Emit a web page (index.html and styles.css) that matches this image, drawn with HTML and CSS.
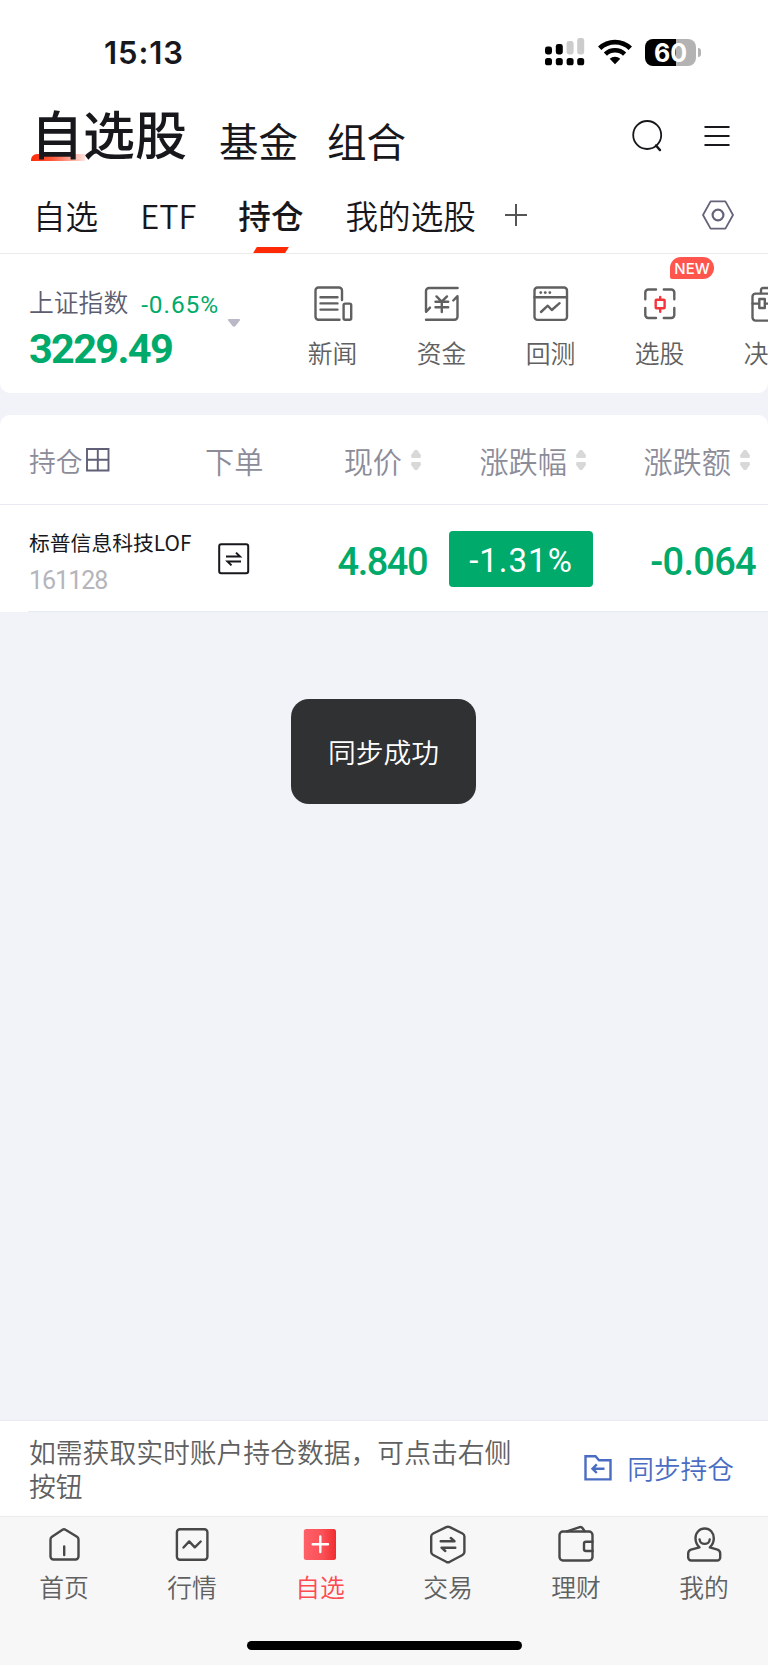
FILE: index.html
```
<!DOCTYPE html>
<html lang="zh-CN">
<head>
    <meta charset="UTF-8">
    <meta name="viewport" content="width=device-width, initial-scale=1.0">
    <title>自选股</title>
    <link rel="stylesheet" href="styles.css">
</head>
<body>
    <div class="page">
        <div class="status-bar">
            <span class="time">15:13</span>
            <svg class="signal" width="40" height="28" viewBox="0 0 40 28">
                <rect x="0" y="8.5" width="7" height="8" rx="2.4"/>
                <rect x="10.8" y="6" width="7" height="10.5" rx="2.4"/>
                <rect x="21.6" y="3" width="7" height="13.5" rx="2.4" fill="#ccc"/>
                <rect x="32.2" y="0" width="7" height="16.5" rx="2.4" fill="#ccc"/>
                <rect x="0" y="20" width="7" height="7.3" rx="2.6"/>
                <rect x="10.8" y="20" width="7" height="7.3" rx="2.6"/>
                <rect x="21.6" y="20" width="7" height="7.3" rx="2.6"/>
                <rect x="32.2" y="20" width="7" height="7.3" rx="2.6"/>
            </svg>
            <svg class="wifi" width="34" height="26" viewBox="0 0 34 26">
                <path d="M1.7 9.3a22 22 0 0 1 30.6 0" fill="none" stroke="#000" stroke-width="4.8"/>
                <path d="M7.4 15.1a14 14 0 0 1 19.2 0" fill="none" stroke="#000" stroke-width="4.6"/>
                <path d="M17 25.2l-5.3-5.4a7.6 7.6 0 0 1 10.6 0z"/>
            </svg>
            <div class="battery"><span>60</span></div>
            <i class="battery-tip"></i>
        </div>

        <header class="header">
            <h1 class="title"><span>自选股</span></h1>
            <a class="title-link">基金</a>
            <a class="title-link">组合</a>
            <svg class="search" width="32" height="34" viewBox="0 0 32 34" fill="none" stroke="#17171c" stroke-width="1.8">
                <circle cx="15.2" cy="16" r="14"/>
                <path d="M24 26.5l4 4.6" stroke-width="2.4" stroke-linecap="round"/>
            </svg>
            <svg class="menu" width="26" height="24" viewBox="0 0 26 24" stroke="#17171c" stroke-width="2">
                <path d="M.5 3h25M.5 12h25M.5 21h25"/>
            </svg>
        </header>

        <nav class="tabs">
            <a class="tab">自选</a>
            <a class="tab">ETF</a>
            <a class="tab active">持仓</a>
            <a class="tab">我的选股</a>
            <svg class="add" width="22" height="22" viewBox="0 0 22 22" stroke="#555" stroke-width="2">
                <path d="M0 11h22M11 0v22"/>
            </svg>
            <svg class="setting" width="32" height="30" viewBox="0 0 32 30" fill="none" stroke="#63637a" stroke-width="1.8" stroke-linejoin="round">
                <path d="M8.6 1.4h14.8L31 15l-7.6 13.6H8.6L1 15z"/>
                <circle cx="16" cy="15" r="5.4" stroke-width="2.2"/>
            </svg>
        </nav>

        <section class="index-panel">
            <div class="index">
                <div class="index-top">
                    <span class="index-name">上证指数</span>
                    <span class="index-rate">-0.65%</span>
                </div>
                <div class="index-value">3229.49</div>
            </div>
            <svg class="caret" width="14" height="10" viewBox="0 0 14 10">
                <path d="M2 1h10q2 0 .8 1.5L8.5 8Q7 9.4 5.5 8L1.2 2.5Q0 1 2 1z" fill="#b9b8c6"/>
            </svg>
            <div class="tools">
                <a class="tool">
                    <svg width="40" height="40" viewBox="0 0 40 40">
                        <path d="M29 16V6.5a3 3 0 0 0-3-3H5.500a3 3 0 0 0-3 3V32.700a3 3 0 0 0 3 3H26.500"/>
                        <rect x="30.6" y="19.6" width="7.6" height="16.2" rx="1.5"/>
                        <path d="M7.500 13.300h17M7.500 19.400h17M7.500 25.600h17"/>
                    </svg>
                    <span>新闻</span>
                </a>
                <a class="tool">
                    <svg width="40" height="40" viewBox="0 0 40 40">
                        <path d="M35.600 4H7a3 3 0 0 0-3 3V27.800L8 23.600M4 35.700H32.500a3 3 0 0 0 3-3V12.200L31.300 16.500"/>
                        <path d="M14.500 12.400L19.700 17.600L25 12.400M13.500 17.800H26.200M13.500 23.200H26.200M19.800 17.600V28"/>
                    </svg>
                    <span>资金</span>
                </a>
                <a class="tool">
                    <svg width="40" height="40" viewBox="0 0 40 40">
                        <rect x="3.5" y="3.5" width="32.5" height="32.4" rx="3"/>
                        <path d="M3.500 13.200H36M10 28L16.800 21.700L20.800 26L28.600 19.200"/>
                        <path class="dots" d="M9.700 8.600h.1M14.200 8.600h.1M18.800 8.600h.1"/>
                    </svg>
                    <span>回测</span>
                </a>
                <a class="tool">
                    <svg width="40" height="40" viewBox="0 0 40 40">
                        <path d="M16 5.500H8.300a3 3 0 0 0-3 3V15.200M23.800 5.500H31.300a3 3 0 0 1 3 3V15.200M5.300 24V31a3 3 0 0 0 3 3H16M34.300 24V31a3 3 0 0 1-3 3H23.800"/>
                        <g class="red">
                            <rect x="15.7" y="15.8" width="8.9" height="8.4" rx=".8"/>
                            <path d="M20.200 13V15M20.200 25V27.800"/>
                        </g>
                    </svg>
                    <span>选股</span>
                    <em class="badge">NEW</em>
                </a>
                <a class="tool">
                    <svg width="40" height="40" viewBox="0 0 40 40">
                        <rect x="3.5" y="9.6" width="34" height="27" rx="3"/>
                        <path d="M12 9V6a2 2 0 0 1 2-2H28a2 2 0 0 1 2 2V9M3.500 19.600H10M16 19.600H24"/>
                        <rect x="10.3" y="15" width="5.5" height="9"/>
                    </svg>
                    <span>决策</span>
                </a>
            </div>
        </section>

        <section class="holdings">
            <div class="row head">
                <div class="col-name">持仓
                    <svg width="24" height="24" viewBox="0 0 24 24" fill="none" stroke="#5f5f76" stroke-width="1.9">
                        <path d="M1 1H22.500V22.500H1zM1 11.800H22.500M11.800 1V22.500"/>
                    </svg>
                </div>
                <div class="col-order">下单</div>
                <div class="col-num">现价<i class="sort"></i></div>
                <div class="col-num">涨跌幅<i class="sort"></i></div>
                <div class="col-num">涨跌额<i class="sort"></i></div>
            </div>
            <div class="row item">
                <div class="col-name">
                    <div class="stock-name">标普信息科技LOF</div>
                    <div class="stock-code">161128</div>
                </div>
                <div class="col-order">
                    <svg width="32" height="32" viewBox="0 0 32 32" fill="none" stroke="#17171c" stroke-width="2">
                        <rect x="1.2" y="1.2" width="29" height="29" rx="2"/>
                        <path d="M8 13.600H22L18 9.600M23 18.400H9.500L13.500 22.400"/>
                    </svg>
                </div>
                <div class="col-num">4.840</div>
                <div class="col-num"><span class="rate">-1.31%</span></div>
                <div class="col-num last">-0.064</div>
            </div>
        </section>

        <main class="blank"></main>

        <div class="sync-bar">
            <p>如需获取实时账户持仓数据，可点击右侧按钮</p>
            <a class="sync-btn">
                <svg width="28" height="26" viewBox="0 0 28 26" fill="none" stroke="#4a6cc3" stroke-width="2.4">
                    <path d="M1.500 1.300H11.500L15 5.200H26.500V24.400H1.500z"/>
                    <path d="M20.500 13.700H9M12.800 9.300L8.500 13.700L12.800 18"/>
                </svg>
                <span>同步持仓</span>
            </a>
        </div>

        <footer class="tab-bar">
            <a class="nav">
                <svg width="40" height="40" viewBox="0 0 40 40">
                    <path d="M18.500 5.700Q20 4.700 21.500 5.700L33 12.800Q34.500 13.800 34.500 15.500V32.500a3 3 0 0 1-3 3H9.500a3 3 0 0 1-3-3V15.500Q6.500 13.800 8 12.800zM20.200 22.500V31"/>
                </svg>
                <span>首页</span>
            </a>
            <a class="nav">
                <svg width="40" height="40" viewBox="0 0 40 40">
                    <rect x="4.9" y="5.2" width="30.5" height="30.5" rx="3"/>
                    <path d="M11.500 23.500L17.200 17.400L22.800 23.300L28.700 17.500"/>
                </svg>
                <span>行情</span>
            </a>
            <a class="nav current">
                <svg width="40" height="40" viewBox="0 0 40 40">
                    <defs>
                        <linearGradient id="redFill">
                            <stop offset="0" stop-color="#ff6068"/>
                            <stop offset=".6" stop-color="#fa5056"/>
                            <stop offset="1" stop-color="#f12c2f"/>
                        </linearGradient>
                    </defs>
                    <rect x="3.8" y="5" width="32.2" height="31" rx="2.5" fill="url(#redFill)" stroke="none"/>
                    <path d="M12.700 20.300H28M20.300 12.500V28" stroke="#fff"/>
                </svg>
                <span>自选</span>
            </a>
            <a class="nav">
                <svg width="40" height="40" viewBox="0 0 40 40">
                    <path d="M18.200 3.100Q20 2.300 21.800 3.100L34.500 9.500Q36.400 10.500 36.400 12.500V28Q36.400 30 34.500 31L21.800 37.800Q20 38.600 18.200 37.800L5.200 31Q3.200 30 3.200 28V12.500Q3.200 10.500 5.200 9.500z"/>
                    <path d="M12.700 17.200H26.500L22.800 14M27.300 23.700H13.500L17.300 27"/>
                </svg>
                <span>交易</span>
            </a>
            <a class="nav">
                <svg width="40" height="40" viewBox="0 0 40 40">
                    <rect x="3.5" y="7.5" width="33" height="29" rx="3.5"/>
                    <path d="M11 7.300L23.800 3.100Q25.500 2.600 26.600 4.200L28.500 7M36.500 17.700H30a2 2 0 0 0-2 2V25a2 2 0 0 0 2 2H36.500"/>
                </svg>
                <span>理财</span>
            </a>
            <a class="nav">
                <svg width="40" height="40" viewBox="0 0 40 40">
                    <path d="M15.500 23.300Q11.500 19.500 11.500 14.200C11.500 8.500 15.500 4.500 20.700 4.500S29.800 8.500 29.800 14.200Q29.800 19.500 25.800 23.300L33.500 25.700Q36.200 26.700 36.200 29.500V33.500a3 3 0 0 1-3 3H7.200a3 3 0 0 1-3-3V29.500Q4.200 26.700 7 25.700z"/>
                    <path d="M15.600 15.500C16 21.300 25.300 21.300 25.700 15.500"/>
                </svg>
                <span>我的</span>
            </a>
            <i class="home-indicator"></i>
        </footer>

        <div class="toast">同步成功</div>
    </div>
</body>
</html>
```
FILE: styles.css
```
* {
    box-sizing: border-box;
}
body {
    margin: 0;
    font-family: "Noto Sans CJK SC", sans-serif;
    font-weight: 350;
    color: #17171c;
    background-color: #f2f3f8;
}
h1, p {
    margin: 0;
    font-weight: inherit;
}
svg {
    display: block;
    flex: none;
}
.page {
    position: relative;
    display: flex;
    flex-direction: column;
    width: 768px;
    height: 1665px;
    overflow: hidden;
}

/* status bar */
.status-bar {
    display: flex;
    align-items: center;
    height: 104px;
    padding: 0 67px 0 104px;
    background-color: #fff;
}
.time {
    margin-right: auto;
    font-family: Inter, sans-serif;
    font-size: 31px;
    font-weight: 600;
    letter-spacing: 0.9px;
}
.wifi {
    margin: 0 13px 0 13px;
}
.battery {
    width: 51px;
    height: 27px;
    border-radius: 8px;
    background: linear-gradient(90deg, #000 61%, #b3b3b3 61%);
    color: #fff;
    font: 700 25px/28px Inter, sans-serif;
    text-align: center;
}
.battery-tip {
    width: 3px;
    height: 9px;
    margin-left: 2px;
    border-radius: 0 4px 4px 0;
    background-color: #b3b3b3;
}

/* title */
.header {
    display: flex;
    align-items: center;
    height: 64px;
    padding: 0 38px 0 31px;
    background-color: #fff;
}
.title {
    position: relative;
    margin-right: 32px;
    font-size: 52px;
    font-weight: 500;
    line-height: 58px;
    padding-bottom: 6px;
}
.title span {
    position: relative;
}
.title::before {
    content: "";
    position: absolute;
    left: 0;
    bottom: 7px;
    width: 54px;
    height: 7px;
    border-top-left-radius: 6px;
    background: linear-gradient(90deg, #ff2a05, #ff5a3c 40%, #ffe3de);
}
.title-link {
    padding-top: 8px;
    margin-right: 29px;
    font-size: 39.5px;
    font-weight: 400;
    line-height: 52px;
}
.search {
    margin: 0 40px 0 auto;
}

/* group tabs */
.tabs {
    display: flex;
    align-items: center;
    gap: 42px;
    height: 86px;
    padding: 9px 34px 0 33px;
    border-bottom: 1px solid #ebebee;
    background-color: #fff;
}
.tab {
    position: relative;
    font-size: 32.6px;
    line-height: 76px;
}
.tab.active {
    font-weight: 500;
}
.tab.active::after {
    content: "";
    position: absolute;
    left: 17px;
    bottom: 0;
    width: 32px;
    height: 6px;
    background-color: #ff2a05;
    transform: skewX(-32deg);
}
.add {
    margin-left: -13px;
}
.setting {
    margin-left: auto;
}

/* index + tools */
.index-panel {
    display: flex;
    height: 139px;
    border-radius: 0 0 10px 10px;
    background-color: #fff;
    overflow: hidden;
}
.index {
    flex: none;
    width: 227px;
    padding: 29px 0 0 29px;
    white-space: nowrap;
}
.index-top {
    display: flex;
    align-items: center;
    height: 36px;
}
.index-name {
    font-size: 24.8px;
    line-height: 36px;
    color: #5d5d70;
}
.index-rate {
    margin: 7px 0 0 13px;
    font: 400 24.5px/30px Roboto, sans-serif;
    letter-spacing: 0.9px;
    color: #00aa6a;
}
.index-value {
    font: 700 41.5px/50px Roboto, sans-serif;
    letter-spacing: -1.7px;
    margin-top: 5px;
    color: #00aa6a;
}
.caret {
    margin-top: 64px;
}
.tools {
    display: flex;
    flex: none;
    margin-left: 37px;
}
.tool {
    position: relative;
    display: flex;
    flex-direction: column;
    align-items: center;
    width: 109px;
    padding-top: 30px;
    font-size: 24.8px;
    line-height: 36px;
    color: #606060;
}
.tool svg {
    margin-bottom: 10px;
    fill: none;
    stroke: #606060;
    stroke-width: 2.4;
    stroke-linecap: round;
    stroke-linejoin: round;
}
.tool .red {
    stroke: #f5343a;
}
.tool .dots {
    stroke-width: 2.8;
}
.badge {
    position: absolute;
    left: 65px;
    top: 3px;
    width: 44px;
    height: 22px;
    border-radius: 11px 11px 11px 2px;
    background-color: #ff554c;
    color: #fff;
    font: 500 15px/24px Inter, sans-serif;
    text-align: center;
}

/* holdings */
.holdings {
    margin-top: 22px;
    border-radius: 10px 10px 0 0;
    background-color: #fff;
}
.row {
    display: grid;
    align-items: center;
}
.head {
    grid-template-columns: 205px 88px 128px 165px 164px;
    height: 90px;
    padding-top: 1px;
    border-bottom: 1px solid #e9e9f3;
    font-size: 29.2px;
    color: #8c8c99;
}
.item {
    grid-template-columns: 218px 80px 129px 166px 163px;
    height: 107px;
    background: linear-gradient(#e6eaf1, #e6eaf1) 28px 100% / 100% 1px no-repeat;
}
.col-name {
    padding-left: 29px;
}
.head .col-name {
    display: flex;
    align-items: center;
    font-size: 26.8px;
}
.head .col-name svg {
    margin-left: 3px;
}
.col-num {
    display: flex;
    align-items: center;
    justify-content: flex-end;
    white-space: nowrap;
}
.item .col-num {
    font: 500 38px/46px Roboto, sans-serif;
    letter-spacing: -1.5px;
    color: #00aa6a;
    padding-top: 6px;
}
.item .last {
    letter-spacing: -0.7px;
}
.item .rate {
    width: 144px;
    height: 56px;
    margin-top: -6px;
    border-radius: 4px;
    background-color: #00aa6a;
    color: #fff;
    font: 400 33px/60px Roboto, sans-serif;
    letter-spacing: 1px;
    text-align: center;
}
.sort {
    width: 10px;
    margin-left: 9px;
}
.sort::before, .sort::after {
    content: "";
    display: block;
    height: 8px;
    background-color: #d8d8d8;
    clip-path: polygon(38% 0, 62% 0, 100% 65%, 95% 100%, 5% 100%, 0 65%);
}
.sort::after {
    margin-top: 4px;
    transform: rotate(180deg);
}
.stock-name {
    padding-top: 4px;
    font-size: 20.8px;
    font-weight: 400;
    line-height: 34px;
    white-space: nowrap;
}
.stock-code {
    margin-top: 7px;
    font: 400 25px/30px Roboto, sans-serif;
    letter-spacing: -1px;
    color: #b5b5bb;
}
.blank {
    flex: 1;
}

/* sync bar */
.sync-bar {
    display: flex;
    align-items: center;
    justify-content: space-between;
    height: 97px;
    padding: 0 34px 0 29px;
    border-top: 1px solid #e9eaef;
    border-bottom: 1px solid #ececec;
    background-color: #fff;
    color: #606060;
}
.sync-bar p {
    width: 490px;
    font-size: 26.8px;
    line-height: 34px;
}
.sync-btn {
    display: flex;
    align-items: center;
    gap: 15px;
    padding-bottom: 2px;
    font-size: 26.7px;
    color: #4a6cc3;
}

/* bottom tab bar */
.tab-bar {
    display: flex;
    flex-wrap: wrap;
    align-content: flex-start;
    justify-content: center;
    height: 148px;
    background-color: #f7f7f7;
}
.nav {
    display: flex;
    flex-direction: column;
    align-items: center;
    width: 128px;
    padding-top: 7px;
    font-size: 24.8px;
    line-height: 36px;
    color: #606060;
}
.nav svg {
    margin-bottom: 4px;
    fill: none;
    stroke: #484848;
    stroke-width: 2.4;
    stroke-linecap: round;
    stroke-linejoin: round;
}
.nav.current {
    color: #ff4a50;
}
.home-indicator {
    width: 275px;
    height: 9px;
    margin-top: 37px;
    border-radius: 5px;
    background-color: #000;
}

.toast {
    position: absolute;
    left: 291px;
    top: 699px;
    width: 185px;
    height: 105px;
    border-radius: 18px;
    background-color: #303133;
    color: #fff;
    font-size: 27.8px;
    line-height: 104px;
    text-align: center;
}
```
